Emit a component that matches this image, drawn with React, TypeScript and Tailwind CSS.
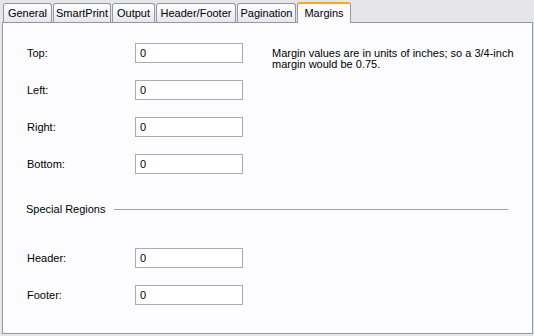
import React from 'react';

// [label, width, left gap]
const tabs: [string, string][] = [
  ['General', 'w-[49px] ml-[3px]'],
  ['SmartPrint', 'w-[58px] ml-[1px]'],
  ['Output', 'w-[43px] ml-[1px]'],
  ['Header/Footer', 'w-[80px] ml-[1px]'],
  ['Pagination', 'w-[59px] ml-[1px]'],
];

const font = { fontFamily: '"Liberation Sans", Arial, sans-serif' };

const Field: React.FC<{ label: string }> = ({ label }) => (
  <div className="flex items-center h-[20px]">
    <span className="w-[109px] pl-[1px]">{label}</span>
    <div className="w-[108px] h-[20px] border border-[#a5acb2] bg-white flex items-center pl-[4px]">0</div>
  </div>
);

const App: React.FC = () => {
  return (
    <div
      className="w-[534px] h-[336px] bg-[#e6e5ea] text-[11px] text-black leading-none overflow-hidden"
      style={font}
    >
      <div className="flex items-end h-[22px]">
        {tabs.map(([t, cls]) => (
          <div
            key={t}
            className={`${cls} h-[19px] flex items-center justify-center border border-b-0 border-[#919b9c] rounded-t-[3px] bg-gradient-to-b from-white to-[#e7e6ee]`}
          >
            {t}
          </div>
        ))}
        <div className="relative z-10 -mb-px h-[21px] w-[54px] ml-[1px] flex items-center justify-center border border-b-0 border-[#919b9c] border-t-2 border-t-[#f5a623] rounded-t-[3px] bg-[#fcfcfe]">
          Margins
        </div>
      </div>
      <div className="ml-[2px] w-[531px] h-[312px] border border-[#919b9c] bg-[#fcfcfe] pl-[23px] pt-[20px]">
        <div className="flex">
          <div className="flex flex-col gap-[17px]">
            <Field label="Top:" />
            <Field label="Left:" />
            <Field label="Right:" />
            <Field label="Bottom:" />
          </div>
          <p className="ml-[29px] mt-[5px] w-[250px] leading-[11px]">
            Margin values are in units of inches; so a 3/4-inch margin would be 0.75.
          </p>
        </div>
        <div className="flex items-center mt-[29px] pr-[24px] h-[12px]">
          <span>Special Regions</span>
          <div className="flex-1 ml-[8px] h-px bg-[#a0a0a0]" />
        </div>
        <div className="flex flex-col gap-[17px] mt-[33px]">
          <Field label="Header:" />
          <Field label="Footer:" />
        </div>
      </div>
    </div>
  );
};

export default App;
